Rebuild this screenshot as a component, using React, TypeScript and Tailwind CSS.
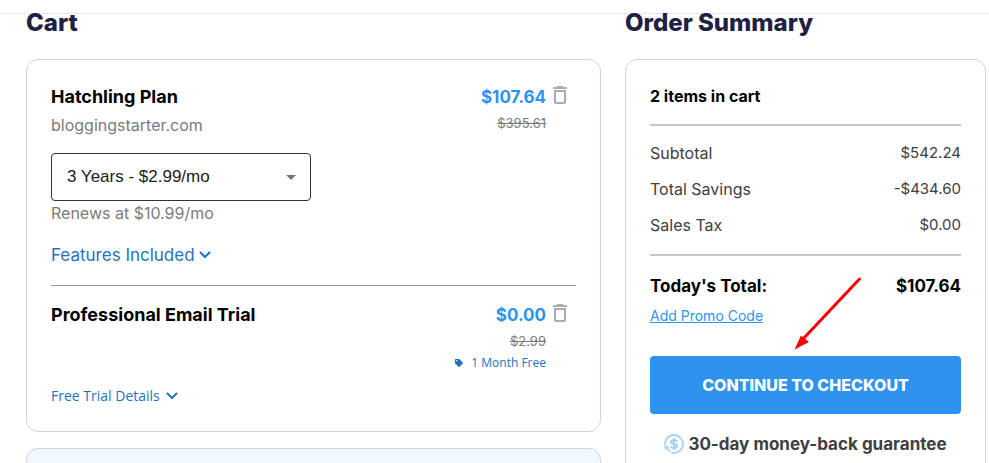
import { FaTag } from 'react-icons/fa';
import { MdArrowDropDown, MdDeleteOutline } from 'react-icons/md';

const totals = [
  { label: 'Subtotal', value: '$542.24' },
  { label: 'Total Savings', value: '-$434.60' },
  { label: 'Sales Tax', value: '$0.00' },
];

function Chevron() {
  return (
    <svg viewBox="0 0 12 8" className="w-3 h-2" fill="none" stroke="currentColor" strokeWidth="2" aria-hidden="true">
      <path d="M1 1l5 5 5-5" />
    </svg>
  );
}

function RemoveButton({ label }: { label: string }) {
  return (
    <button type="button" aria-label={label} className="-mt-0.5 ml-0.5 mr-1 text-[#a9acb0]">
      <MdDeleteOutline className="size-6" />
    </button>
  );
}

function GuaranteeIcon() {
  return (
    <svg viewBox="0 0 20 20" className="size-5 text-[#a5d2fa]" fill="none" stroke="currentColor" aria-hidden="true">
      <path strokeWidth="1.8" d="M1.1 11.5A9 9 0 1 1 7 18.5" />
      <path fill="currentColor" stroke="none" d="M.3 12.2l5-.8-1.5 2.2c.6 1.3 1.5 2.3 2.6 3l-.8 1.5c-1.4-.8-2.500-1.900-3.200-3.200l-1.600 1.200z" />
      <path strokeWidth="1.9" d="M13.2 7.6c-.5-1-1.6-1.4-3.2-1.4-1.9 0-3.1.6-3.1 1.8s1.2 1.7 3.1 2 3.2.8 3.2 2-1.3 1.900-3.200 1.900c-1.600 0-2.800-.5-3.400-1.500M10 4v12" />
    </svg>
  );
}

export default function App() {
  return (
    <div className="h-screen overflow-hidden bg-white font-['Inter',sans-serif] text-black">
      <header className="h-3.5 border-b border-[#e6e6ef]" />
      <main className="grid grid-cols-[minmax(0,1fr)_361px] gap-6 pl-[26px] pr-[3px]">
        <section>
          <h2 className="mb-[27px] text-2xl leading-[18px] font-extrabold text-[#1f2044]">Cart</h2>
          <div className="rounded-xl border border-[#d2d2e1] px-6 pt-[25px] pb-[23px]">
            <div className="flex justify-between">
              <div>
                <h3 className="text-lg leading-6 font-bold">Hatchling Plan</h3>
                <p className="mt-1 leading-6 text-[#7b7b7b]">bloggingstarter.com</p>
              </div>
              <div className="flex items-start">
                <div className="text-right">
                  <p className="text-[17px] leading-6 font-bold text-[#2e93ee]">$107.64</p>
                  <p className="mt-1 text-[13px] leading-5 text-[#7b7b7b] line-through">$395.61</p>
                </div>
                <RemoveButton label="Remove Hatchling Plan" />
              </div>
            </div>
            <div className="relative mt-4 w-[260px]">
              <select
                aria-label="Billing term"
                className="h-12 w-full appearance-none rounded border border-[#333] bg-white px-[15px] font-['Liberation_Sans',sans-serif] text-[17px] text-[#212121]"
              >
                <option>3 Years - $2.99/mo</option>
              </select>
              <MdArrowDropDown className="pointer-events-none absolute top-3 right-2 size-6 text-[#757575]" />
            </div>
            <p className="leading-6 text-[#7b7b7b]">Renews at $10.99/mo</p>
            <button type="button" className="mt-[18px] flex items-center gap-1 text-[17px] leading-6 text-[#1f73be]">
              Features Included
              <Chevron />
            </button>
            <hr className="mt-[18px] mb-[17px] border-[#9b9b9b]" />
            <div className="flex justify-between">
              <h3 className="text-lg leading-6 font-bold">Professional Email Trial</h3>
              <div className="flex items-start">
                <div className="text-right">
                  <p className="text-[17px] leading-6 font-bold text-[#2e93ee]">$0.00</p>
                  <p className="mt-1 text-[13px] leading-5 text-[#7b7b7b] line-through">$2.99</p>
                  <p className="mt-0.5 flex items-center gap-2 font-['Open_Sans',sans-serif] text-xs leading-5 text-[#1f73be]">
                    <FaTag className="size-2" />
                    1 Month Free
                  </p>
                </div>
                <RemoveButton label="Remove Professional Email Trial" />
              </div>
            </div>
            <button
              type="button"
              className="mt-[11px] flex items-center gap-1.5 font-['Open_Sans',sans-serif] text-sm leading-6 text-[#1f73be]"
            >
              Free Trial Details
              <Chevron />
            </button>
          </div>
          <div className="mt-4 h-40 rounded-xl border border-[#d2d2e1] bg-[#f1f9ff]" />
        </section>

        <section>
          <h2 className="mb-[27px] text-2xl leading-[18px] font-extrabold text-[#1f2044]">Order Summary</h2>
          <div className="rounded-xl border border-[#d2d2e1] px-6 pt-6 pb-16">
            <h3 className="text-base leading-6 font-bold">2 items in cart</h3>
            <dl className="mt-4 mb-[18px] flex flex-col gap-3 border-y-2 border-[#c8c8c8] pt-[15px] pb-[17px] text-[#404040]">
              {totals.map((row) => (
                <div key={row.label} className="flex justify-between leading-6">
                  <dt>{row.label}</dt>
                  <dd className="text-[15px]">{row.value}</dd>
                </div>
              ))}
            </dl>
            <div className="flex justify-between text-[17px] leading-6 font-bold">
              <p>Today&apos;s Total:</p>
              <p>$107.64</p>
            </div>
            <a href="#promo" className="mt-2 block w-fit text-sm leading-5 text-[#2e93ee] underline">
              Add Promo Code
            </a>
            <div className="relative mt-[30px]">
              <button
                type="button"
                className="h-[58px] w-full rounded bg-[#2e93ee] text-base font-extrabold text-white"
              >
                CONTINUE TO CHECKOUT
              </button>
              {/* pointer to the checkout button */}
              <svg viewBox="0 0 68 74" className="pointer-events-none absolute bottom-full left-36 mb-[5px] h-[74px] w-[68px]" aria-hidden="true">
                <path d="M65.5 2L9 62" stroke="#fe0000" strokeWidth="3" strokeLinecap="round" />
                <path d="M.5 72.5L7 58.5l3 2.5 5 4z" fill="#fe0000" />
              </svg>
            </div>
            <p className="mt-[18px] flex items-center justify-center gap-1 text-[17px] leading-6 font-bold text-[#404040]">
              <GuaranteeIcon />
              30-day money-back guarantee
            </p>
          </div>
        </section>
      </main>
    </div>
  );
}
